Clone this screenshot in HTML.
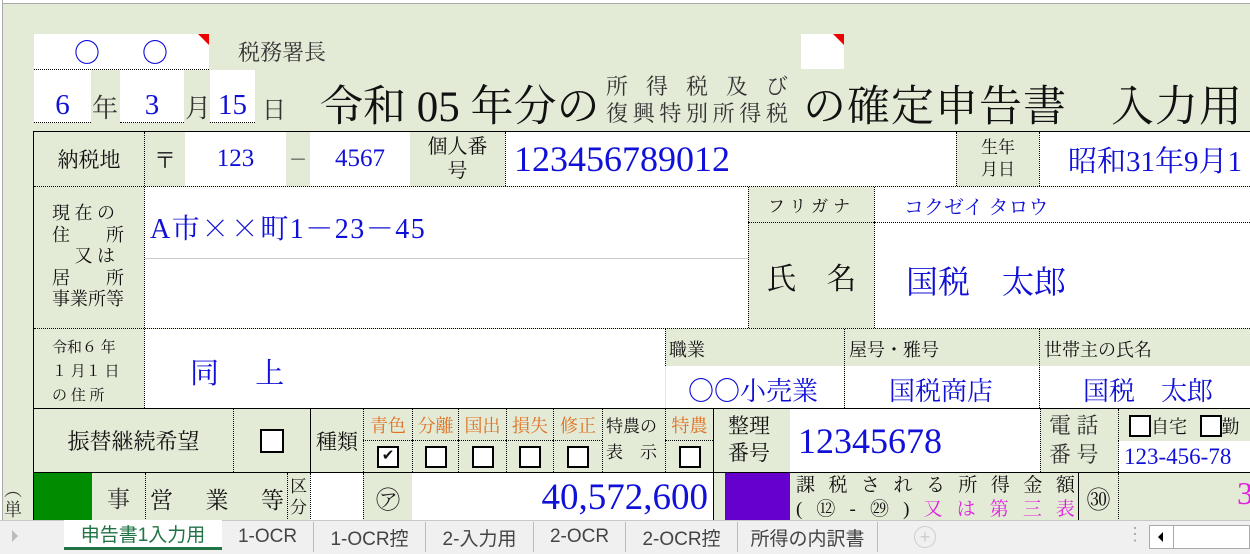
<!DOCTYPE html>
<html><head><meta charset="utf-8">
<style>
*{margin:0;padding:0;box-sizing:border-box}
body{width:1250px;height:554px;overflow:hidden;background:#e3ead6;position:relative;font-family:"Liberation Serif","Noto Serif CJK JP",serif;color:#111}
.a{position:absolute}
.c{position:absolute;display:flex;align-items:center;justify-content:center;text-align:center;white-space:nowrap}
.w{background:#fff}
.g{background:#e3ead6}
.b{color:#1010d8}
.o{color:#e07020}
.dl{border-left:1px dotted #000}
.dt{border-top:1px dotted #000}
.sl{border-left:1px solid #000}
.st{border-top:1px solid #000}
.cb{display:inline-block;width:22px;height:22px;border:2px solid #000;background:#fff}
.tab{position:absolute;top:522px;height:30px;font-family:"Liberation Sans","Noto Sans CJK JP",sans-serif;font-size:19px;color:#444;display:flex;align-items:center;justify-content:center;border-right:1px solid #bbb}
.j{display:flex;justify-content:space-between}
.cj{font-family:"Noto Serif CJK JP",serif}
</style></head><body>
<div class="a" style="left:0;top:0;width:1250px;height:4px;background:#fff;border-bottom:1px solid #aaa"></div>
<div class="a" style="left:0;top:0;width:3px;height:520px;background:#fff;border-right:1px solid #aaa"></div>

<div class="c w" style="left:34px;top:34px;width:175px;height:36px;border-bottom:1px dotted #000;font-size:26px;color:#1010d8;justify-content:flex-start"><span style="margin-left:40px">〇</span><span style="margin-left:42px">〇</span></div>
<div class="a" style="left:198px;top:34px;width:0;height:0;border-top:11px solid #e00;border-left:11px solid transparent"></div>
<div class="c" style="left:238px;top:36px;font-size:22px;color:#333">税務署長</div>
<div class="a w" style="left:801px;top:34px;width:43px;height:35px"></div>
<div class="a" style="left:833px;top:34px;width:0;height:0;border-top:11px solid #e00;border-left:11px solid transparent"></div>

<div class="c w b" style="left:34px;top:70px;width:57px;height:53px;border-bottom:1px dotted #000;font-size:29px;align-items:flex-end;padding-left:0">6</div>
<div class="c" style="left:92px;top:88px;font-size:26px;color:#333">年</div>
<div class="c w b" style="left:120px;top:70px;width:64px;height:53px;border-bottom:1px dotted #000;font-size:29px;align-items:flex-end">3</div>
<div class="c" style="left:185px;top:88px;font-size:26px;color:#333">月</div>
<div class="c w b" style="left:210px;top:70px;width:45px;height:53px;border-bottom:1px dotted #000;font-size:29px;align-items:flex-end">15</div>
<div class="c" style="left:262px;top:90px;font-size:24px;color:#333">日</div>

<div class="c" style="left:320px;top:73px;font-size:43px;letter-spacing:0px">令和 05 年分の</div>
<div class="a j" style="left:606px;top:70px;width:182px;font-size:22px;color:#333"><span>所</span><span>得</span><span>税</span><span>及</span><span>び</span></div>
<div class="a j" style="left:606px;top:97px;width:182px;font-size:22px;color:#333"><span>復</span><span>興</span><span>特</span><span>別</span><span>所</span><span>得</span><span>税</span></div>
<div class="c" style="left:803px;top:73px;font-size:43px;letter-spacing:1px">の確定申告書　入力用</div>

<div class="a" style="left:33px;top:131px;width:1217px;height:390px;border-left:1px solid #000;border-top:1px solid #000"></div>

<!-- Row1 -->
<div class="c g" style="left:34px;top:132px;width:110px;height:54px;font-size:21px">納税地</div>
<div class="c g dl" style="left:144px;top:132px;width:41px;height:54px;font-size:22px">〒</div>
<div class="c w b" style="left:185px;top:132px;width:101px;height:54px;font-size:25px">123</div>
<div class="c g" style="left:286px;top:132px;width:24px;height:54px;font-size:18px">－</div>
<div class="c w b" style="left:310px;top:132px;width:100px;height:54px;font-size:25px">4567</div>
<div class="c g" style="left:410px;top:132px;width:95px;height:54px;font-size:20px;line-height:24px;white-space:normal;padding:0 14px">個人番号</div>
<div class="c w b dl" style="left:505px;top:132px;width:451px;height:54px;font-size:36px;justify-content:flex-start;padding-left:8px">123456789012</div>
<div class="c g dl" style="left:956px;top:132px;width:83px;height:54px;font-size:17px;line-height:22px;white-space:normal;padding:0 22px">生年月日</div>
<div class="c w b dl" style="left:1039px;top:132px;width:211px;height:54px;font-size:29px;justify-content:flex-start;padding-left:28px;overflow:hidden">昭和31年9月1</div>

<!-- Row2 -->
<div class="a dt" style="left:34px;top:186px;width:1216px;height:0"></div>
<div class="a g" style="left:34px;top:187px;width:110px;height:141px;font-size:18px;line-height:21.5px;padding:16px 0 0 18px;white-space:pre">現 在 の
住　　所
　 又 は
居　　所
事業所等</div>
<div class="a w dl" style="left:144px;top:187px;width:604px;height:141px"></div>
<div class="a" style="left:145px;top:258px;width:603px;height:1px;background:#ccc"></div>
<div class="c b" style="left:150px;top:207px;font-size:28px;letter-spacing:1.5px">A市<span class="cj">××</span>町1－23－45</div>
<div class="c g dl" style="left:748px;top:187px;width:126px;height:35px;font-size:17px;letter-spacing:5px">フリガナ</div>
<div class="c g dl dt" style="left:748px;top:222px;width:126px;height:106px;font-size:30px">氏　名</div>
<div class="a w dl" style="left:874px;top:187px;width:376px;height:141px"></div>
<div class="a dt" style="left:874px;top:222px;width:376px;height:0"></div>
<div class="c b cj" style="left:904px;top:191px;font-size:20px">コクゼイ タロウ</div>
<div class="c b" style="left:906px;top:257px;font-size:32px">国税　太郎</div>

<!-- Row3 -->
<div class="a dt" style="left:34px;top:328px;width:1216px;height:0"></div>
<div class="a g" style="left:34px;top:329px;width:110px;height:79px;font-size:15px;line-height:24px;padding:7px 0 0 18px;white-space:pre">令和６ 年
１ 月１ 日
の 住 所</div>
<div class="a w dl" style="left:144px;top:329px;width:521px;height:79px"></div>
<div class="c b" style="left:190px;top:351px;font-size:29px">同　 上</div>
<div class="a g dl" style="left:665px;top:329px;width:585px;height:37px"></div>
<div class="c" style="left:669px;top:336px;font-size:18px">職業</div>
<div class="a dl" style="left:844px;top:329px;height:79px;width:0"></div>
<div class="c" style="left:849px;top:336px;font-size:18px">屋号・雅号</div>
<div class="a dl" style="left:1039px;top:329px;height:79px;width:0"></div>
<div class="c" style="left:1044px;top:336px;font-size:18px">世帯主の氏名</div>
<div class="a w" style="left:666px;top:366px;width:178px;height:42px"></div>
<div class="a w" style="left:845px;top:366px;width:194px;height:42px"></div>
<div class="a w" style="left:1040px;top:366px;width:210px;height:42px"></div>
<div class="c b" style="left:688px;top:371px;font-size:26px">〇〇小売業</div>
<div class="c b" style="left:889px;top:371px;font-size:26px">国税商店</div>
<div class="c b" style="left:1083px;top:371px;font-size:26px">国税　太郎</div>

<!-- Row4 -->
<div class="a st" style="left:34px;top:408px;width:1216px;height:0"></div>
<div class="c g" style="left:34px;top:409px;width:199px;height:63px;font-size:22px">振替継続希望</div>
<div class="c g dl" style="left:233px;top:409px;width:77px;height:63px"><span class="cb" style="width:24px;height:24px"></span></div>
<div class="c g sl" style="left:310px;top:409px;width:53px;height:63px;font-size:21px">種類</div>
<div class="a g" style="left:363px;top:409px;width:302px;height:63px"></div>
<div class="c o dl" style="left:363px;top:409px;width:49px;height:31px;font-size:18px">青色</div>
<div class="c o dl" style="left:412px;top:409px;width:46px;height:31px;font-size:18px">分離</div>
<div class="c o dl" style="left:458px;top:409px;width:48px;height:31px;font-size:18px">国出</div>
<div class="c o dl" style="left:506px;top:409px;width:47px;height:31px;font-size:18px">損失</div>
<div class="c o dl" style="left:553px;top:409px;width:49px;height:31px;font-size:18px">修正</div>
<div class="c dl dt" style="left:363px;top:440px;width:49px;height:32px;font-size:16px"><span class="cb" style="font-size:15px;line-height:17px;text-align:center">✔</span></div>
<div class="c dl dt" style="left:412px;top:440px;width:46px;height:32px"><span class="cb"></span></div>
<div class="c dl dt" style="left:458px;top:440px;width:48px;height:32px"><span class="cb"></span></div>
<div class="c dl dt" style="left:506px;top:440px;width:47px;height:32px"><span class="cb"></span></div>
<div class="c dl dt" style="left:553px;top:440px;width:49px;height:32px"><span class="cb"></span></div>
<div class="a dl" style="left:602px;top:409px;width:63px;height:63px;font-size:17px;line-height:26px;padding:5px 0 0 3px;white-space:pre">特農の
表　示</div>
<div class="c o dl" style="left:665px;top:409px;width:48px;height:31px;font-size:18px">特農</div>
<div class="c dl dt" style="left:665px;top:440px;width:48px;height:32px"><span class="cb"></span></div>
<div class="a g sl" style="left:713px;top:409px;width:77px;height:63px;font-size:21px;line-height:27px;padding:4px 0 0 14px;white-space:pre">整理
番号</div>
<div class="c w b" style="left:790px;top:409px;width:250px;height:63px;font-size:36px;justify-content:flex-start;padding-left:8px">12345678</div>
<div class="a g dl" style="left:1040px;top:409px;width:78px;height:63px;font-size:22px;line-height:29px;padding:2px 0 0 8px;white-space:pre;color:#333">電 話
番 号</div>
<div class="a g dl" style="left:1118px;top:409px;width:132px;height:32px;font-size:18px;padding:4px 0 0 10px;white-space:nowrap;overflow:hidden"><span class="cb" style="vertical-align:-4px"></span>自宅 <span class="cb" style="vertical-align:-4px;margin-left:8px"></span>勤</div>
<div class="c w b dl" style="left:1118px;top:441px;width:132px;height:31px;font-size:23px;justify-content:flex-start;padding-left:5px;overflow:hidden">123-456-78</div>

<!-- Row5 -->
<div class="a st" style="left:34px;top:472px;width:1216px;height:0"></div>
<div class="a" style="left:34px;top:473px;width:58px;height:48px;background:#008c00"></div>
<div class="c g" style="left:92px;top:473px;width:53px;height:48px;font-size:23px;color:#333">事</div>
<div class="a g dl j" style="left:145px;top:473px;width:142px;height:48px;font-size:23px;padding:9px 3px 0 4px"><span>営</span><span>業</span><span>等</span></div>
<div class="a g dl" style="left:287px;top:473px;width:23px;height:48px;font-size:17px;line-height:21px;padding:3px 0 0 2px;white-space:pre">区
分</div>
<div class="a w dl" style="left:310px;top:473px;width:53px;height:48px"></div>
<div class="c g dl" style="left:363px;top:473px;width:49px;height:48px;font-size:24px">㋐</div>
<div class="c w b" style="left:412px;top:473px;width:301px;height:48px;font-size:37px;justify-content:flex-end;padding-right:5px">40,572,600</div>
<div class="a g sl" style="left:713px;top:473px;width:12px;height:48px"></div>
<div class="a" style="left:725px;top:473px;width:65px;height:48px;background:#6600cc"></div>
<div class="a g" style="left:790px;top:473px;width:288px;height:48px;font-size:19px;line-height:24px;padding:1px 3px 0 6px">
<div class="j"><span>課</span><span>税</span><span>さ</span><span>れ</span><span>る</span><span>所</span><span>得</span><span>金</span><span>額</span></div>
<div class="j"><span>(</span><span>⑫</span><span>-</span><span>㉙</span><span>)</span><span style="color:#e020e0">又</span><span style="color:#e020e0">は</span><span style="color:#e020e0">第</span><span style="color:#e020e0">三</span><span style="color:#e020e0">表</span></div></div>
<div class="c g sl" style="left:1078px;top:473px;width:40px;height:48px;font-size:24px">㉚</div>
<div class="a g dl" style="left:1118px;top:473px;width:132px;height:48px;font-size:32px;color:#e020e0;overflow:hidden"><span style="position:absolute;left:118px;top:2px">3</span></div>
<div class="a" style="left:4px;top:480px;font-size:18px;line-height:20px;white-space:pre;color:#333">︵
単</div>

<!-- tabs -->
<div class="a" style="left:0;top:520px;width:1250px;height:34px;background:#f0f0f0;border-top:1px solid #c8c8c8"></div>
<div class="a" style="left:12px;top:530px;width:0;height:0;border-left:6px solid #bbb;border-top:6px solid transparent;border-bottom:6px solid transparent"></div>
<div class="tab" style="left:64px;top:520px;width:158px;height:30px;background:#fff;color:#217346;border-bottom:3px solid #217346;border-right:none">申告書1入力用</div>
<div class="tab" style="left:222px;width:92px">1-OCR</div>
<div class="tab" style="left:314px;width:112px">1-OCR控</div>
<div class="tab" style="left:426px;width:108px">2-入力用</div>
<div class="tab" style="left:534px;width:92px">2-OCR</div>
<div class="tab" style="left:626px;width:112px">2-OCR控</div>
<div class="tab" style="left:738px;width:140px">所得の内訳書</div>
<div class="c" style="left:914px;top:526px;width:22px;height:22px;border:1px solid #ccc;border-radius:50%;color:#ccc;font-size:18px;font-family:'Liberation Sans',sans-serif">+</div>
<div class="c" style="left:1126px;top:524px;color:#aaa;font-size:18px;font-family:'Liberation Sans',sans-serif">⋮</div>
<div class="a" style="left:1149px;top:525px;width:101px;height:24px;background:#fff;border:1px solid #aaa"></div>
<div class="a" style="left:1173px;top:525px;width:1px;height:24px;background:#aaa"></div>
<div class="a" style="left:1158px;top:532px;width:0;height:0;border-right:5px solid #000;border-top:5px solid transparent;border-bottom:5px solid transparent"></div>
</body></html>
